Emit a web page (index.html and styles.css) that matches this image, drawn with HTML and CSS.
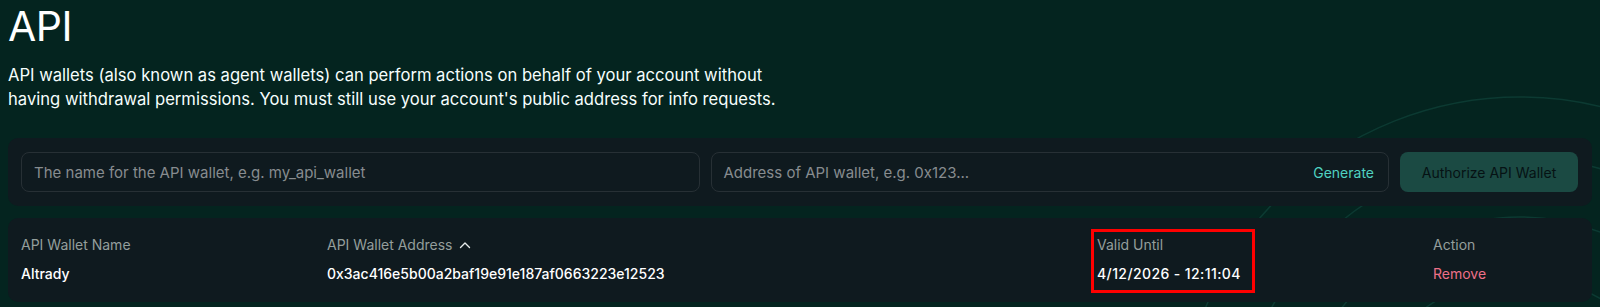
FILE: index.html
```html
<!DOCTYPE html>
<html lang="en">
<head>
<meta charset="utf-8">
<title>API</title>
<link rel="stylesheet" href="styles.css">
</head>
<body>
<svg class="bg-deco" width="1600" height="307" viewBox="0 0 1600 307" aria-hidden="true">
  <circle cx="1520" cy="437" r="340"></circle>
  <circle cx="1520" cy="437" r="280"></circle>
  <circle cx="1520" cy="437" r="220"></circle>
  <circle cx="1520" cy="437" r="160"></circle>
</svg>
<main class="page">
  <h1 class="title">API</h1>
  <p class="intro">API wallets (also known as agent wallets) can perform actions on behalf of your account without<br>having withdrawal permissions. You must still use your account's public address for info requests.</p>

  <section class="panel form-panel">
    <div class="field"><span class="placeholder">The name for the API wallet, e.g. my_api_wallet</span></div>
    <div class="field"><span class="placeholder">Address of API wallet, e.g. 0x123...</span><span class="generate">Generate</span></div>
    <button class="authorize" type="button">Authorize API Wallet</button>
  </section>

  <section class="panel table-panel">
    <div class="col col-name">
      <div class="th">API Wallet Name</div>
      <div class="td">Altrady</div>
    </div>
    <div class="col col-addr">
      <div class="th">API Wallet Address
        <svg class="sort" width="12" height="8" viewBox="0 0 12 8"><polyline points="1.5,6.5 6,2 10.5,6.5"></polyline></svg>
      </div>
      <div class="td">0x3ac416e5b00a2baf19e91e187af0663223e12523</div>
    </div>
    <div class="col col-valid">
      <div class="highlight">
        <div class="th">Valid Until</div>
        <div class="td date">4/12/2026 - 12:11:04</div>
      </div>
    </div>
    <div class="col col-action">
      <div class="th">Action</div>
      <div class="td remove">Remove</div>
    </div>
  </section>
</main>
</body>
</html>
```

FILE: styles.css
```css
html, body {
  margin: 0;
  padding: 0;
}
body {
  background: #04241f;
  color: #ffffff;
  font-family: Inter, "Noto Sans", "Liberation Sans", sans-serif;
  width: 1600px;
  height: 307px;
  overflow: hidden;
  position: relative;
}
.bg-deco {
  position: absolute;
  left: 0;
  top: 0;
  z-index: 0;
}
.bg-deco circle {
  fill: none;
  stroke: #0c3a32;
  stroke-width: 1.5;
}
.page {
  position: relative;
  z-index: 1;
  padding: 0 8px;
}
.title {
  margin: 2px 0 0 0;
  font-size: 41px;
  line-height: 48px;
  font-weight: 400;
  letter-spacing: -0.5px;
}
.intro {
  margin: 13px 0 0 0;
  font-size: 16.6px;
  line-height: 24px;
  color: #f6fefd;
}
.panel {
  background: #0f1a1f;
  border-radius: 10px;
}
.form-panel {
  margin-top: 27px;
  padding: 14px 14px 14px 13px;
  display: grid;
  grid-template-columns: 1fr 1fr 178px;
  gap: 11px;
}
.field {
  height: 40px;
  box-sizing: border-box;
  border: 1px solid #273035;
  border-radius: 8px;
  display: flex;
  align-items: center;
  justify-content: space-between;
  padding: 0 14px 0 12px;
  font-size: 14px;
}
.placeholder {
  color: #878c8f;
  font-size: 15px;
}
.generate {
  color: #50d2c1;
}
.authorize {
  height: 40px;
  border: none;
  border-radius: 8px;
  background: #1b4a43;
  color: #061214;
  font-family: inherit;
  font-size: 14px;
  padding: 0;
}
.table-panel {
  margin-top: 12px;
  padding: 17px 13px 18px 13px;
  display: flex;
  font-size: 14px;
  line-height: 20px;
}
.col {
  display: flex;
  flex-direction: column;
  gap: 9px;
}
.col-name { width: 306px; }
.col-addr { width: 770px; }
.col-valid { width: 336px; }
.col-action { flex: 1; }
.th {
  color: #949e9c;
  display: flex;
  align-items: center;
  gap: 6px;
}
.td {
  color: #ffffff;
  font-weight: 500;
}
.date {
  letter-spacing: 0.4px;
}
.sort {
  display: block;
}
.sort polyline {
  fill: none;
  stroke: #e6eceb;
  stroke-width: 1.4;
  stroke-linecap: round;
  stroke-linejoin: round;
}
.highlight {
  display: flex;
  flex-direction: column;
  gap: 9px;
  align-self: flex-start;
  border: 3px solid #ff0000;
  margin: -6px 0 -9px -6px;
  padding: 3px 11px 6px 3px;
}
.remove {
  color: #ed7088;
  font-weight: 400;
}
```
